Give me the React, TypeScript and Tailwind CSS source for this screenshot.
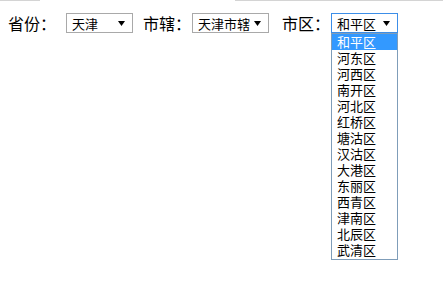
const districts = [
  "和平区", "河东区", "河西区", "南开区", "河北区", "红桥区", "塘沽区",
  "汉沽区", "大港区", "东丽区", "西青区", "津南区", "北辰区", "武清区",
];

function Arrow() {
  return (
    <svg width="7" height="5" viewBox="0 0 7 5" className="shrink-0">
      <path d="M0 0H7L3.5 5Z" fill="#000" />
    </svg>
  );
}

function FakeSelect({ value, width, focused }: { value: string; width: string; focused?: boolean }) {
  return (
    <div
      className={`${width} h-[20px] flex items-center justify-between pl-[5px] pr-[7px] bg-white border ${
        focused ? "border-[#3c8ee8]" : "border-[#a9a9a9]"
      } text-[13px] leading-none text-black`}
    >
      <span>{value}</span>
      <Arrow />
    </div>
  );
}

export default function App() {
  return (
    <div className="w-[443px] h-[283px] bg-white text-black" style={{ fontFamily: '"Noto Sans CJK SC", "Liberation Sans", sans-serif' }}>
      <div className="flex h-px">
        <div className="w-[40px] bg-[#d4d4d4]" />
        <div className="flex-1" />
        <div className="w-[208px] bg-[#d4d4d4]" />
      </div>
      <div className="flex items-center pl-[8px] pt-[12px] text-[16px] leading-none">
        <span className="w-[58px]">省份：</span>
        <FakeSelect value="天津" width="w-[67px]" />
        <span className="ml-[10px] w-[49px]">市辖：</span>
        <FakeSelect value="天津市辖" width="w-[77px]" />
        <span className="ml-[13px] w-[49px]">市区：</span>
        <div className="relative">
          <FakeSelect value="和平区" width="w-[67px]" focused />
          <div className="absolute left-0 top-[20px] w-[67px] pb-[1px] bg-white border border-[#7f9db9] text-[13px]">
            {districts.map((d, i) => (
              <div
                key={d}
                className={`h-[16px] leading-[16px] pl-[5px] ${i === 0 ? "bg-[#3399ff] text-white" : ""}`}
              >
                {d}
              </div>
            ))}
          </div>
        </div>
      </div>
    </div>
  );
}
